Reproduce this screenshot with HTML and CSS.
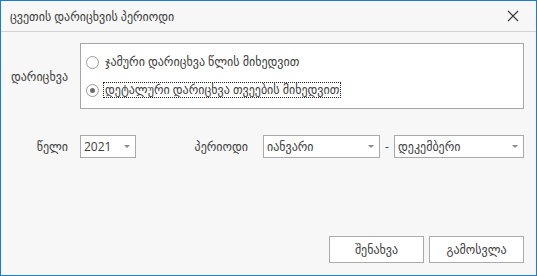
FILE: index.html
```html
<!DOCTYPE html>
<html lang="ka">
<head>
<meta charset="utf-8">
<link rel="stylesheet" href="styles.css">
</head>
<body>
<div class="window">
  <div class="titlebar">
    <span class="title">ცვეთის დარიცხვის პერიოდი</span>
    <svg class="close" width="12" height="12" viewBox="0 0 12 12"><path d="M1 1L11 11M11 1L1 11" stroke="#333" stroke-width="1.1" fill="none"/></svg>
  </div>
  <div class="content">
    <div class="row row-calc">
      <div class="label">დარიცხვა</div>
      <div class="group">
        <div class="radio-line">
          <span class="radio"></span>
          <span class="radio-text">ჯამური დარიცხვა წლის მიხედვით</span>
        </div>
        <div class="radio-line">
          <span class="radio checked"></span>
          <span class="radio-text focus">დეტალური დარიცხვა თვეების მიხედვით</span>
        </div>
      </div>
    </div>
    <div class="row row-period">
      <div class="label">წელი</div>
      <div class="combo combo-year"><span>2021</span><span class="arrow"></span></div>
      <div class="label period-label">პერიოდი</div>
      <div class="combo combo-from"><span>იანვარი</span><span class="arrow"></span></div>
      <div class="dash">-</div>
      <div class="combo combo-to"><span>დეკემბერი</span><span class="arrow"></span></div>
    </div>
    <div class="buttons">
      <button class="btn">შენახვა</button>
      <button class="btn">გამოსვლა</button>
    </div>
  </div>
</div>
</body>
</html>
```
FILE: styles.css
```css
html, body {
  margin: 0;
  padding: 0;
}
body {
  font-family: "Segoe UI", "Open Sans", "DejaVu Sans", sans-serif;
  font-size: 12px;
  color: #404040;
}
.window {
  width: 537px;
  height: 276px;
  box-sizing: border-box;
  border: 1px solid #1c7bd6;
  background: #f7f7f7;
  display: flex;
  flex-direction: column;
}
.titlebar {
  height: 30px;
  border-bottom: 1px solid #d2d2d2;
  display: flex;
  align-items: center;
  justify-content: space-between;
  padding: 0 17px 0 9px;
}
.title {
  color: #404040;
  font-size: 12px;
}
.close {
  display: block;
}
.content {
  flex: 1;
  display: flex;
  flex-direction: column;
  padding: 11px 12px 12px 0;
}
.row {
  display: flex;
  align-items: center;
}
.label {
  width: 67px;
  padding-right: 12px;
  text-align: right;
  white-space: nowrap;
}
.group {
  flex: 1;
  height: 64px;
  border: 1px solid #a5a5a5;
  background: #fff;
  display: flex;
  flex-direction: column;
  justify-content: center;
  gap: 12px;
  padding-left: 5px;
}
.radio-line {
  display: flex;
  align-items: center;
  height: 16px;
}
.radio {
  width: 11px;
  height: 11px;
  border: 1px solid #9a9a9a;
  border-radius: 50%;
  background: #fff;
  box-sizing: content-box;
  margin-right: 4px;
  display: flex;
  align-items: center;
  justify-content: center;
}
.radio.checked::after {
  content: "";
  width: 5px;
  height: 5px;
  border-radius: 50%;
  background: #6d6d6d;
}
.radio-text {
  padding: 0 1px;
  border: 1px dotted transparent;
  line-height: 14px;
}
.radio-text.focus {
  border-color: #222;
}
.row-period {
  margin-top: 26px;
}
.combo {
  height: 21px;
  border: 1px solid #a9a9a9;
  background: #fff;
  display: flex;
  align-items: center;
  justify-content: space-between;
  padding: 0 5px 0 3px;
  box-sizing: content-box;
}
.combo-year {
  width: 46px;
}
.combo-from {
  width: 107px;
}
.combo-to {
  flex: 1;
}
.period-label {
  width: 112px;
  padding-right: 15px;
}
.dash {
  width: 14px;
  text-align: center;
}
.arrow {
  width: 0;
  height: 0;
  border-left: 3px solid transparent;
  border-right: 3px solid transparent;
  border-top: 3px solid #8a8a8a;
}
.buttons {
  margin-top: auto;
  display: flex;
  justify-content: flex-end;
  gap: 5px;
}
.btn {
  width: 95px;
  height: 27px;
  border: 1px solid #ababab;
  background: #fff;
  font: inherit;
  color: #404040;
  padding: 0;
}
```
